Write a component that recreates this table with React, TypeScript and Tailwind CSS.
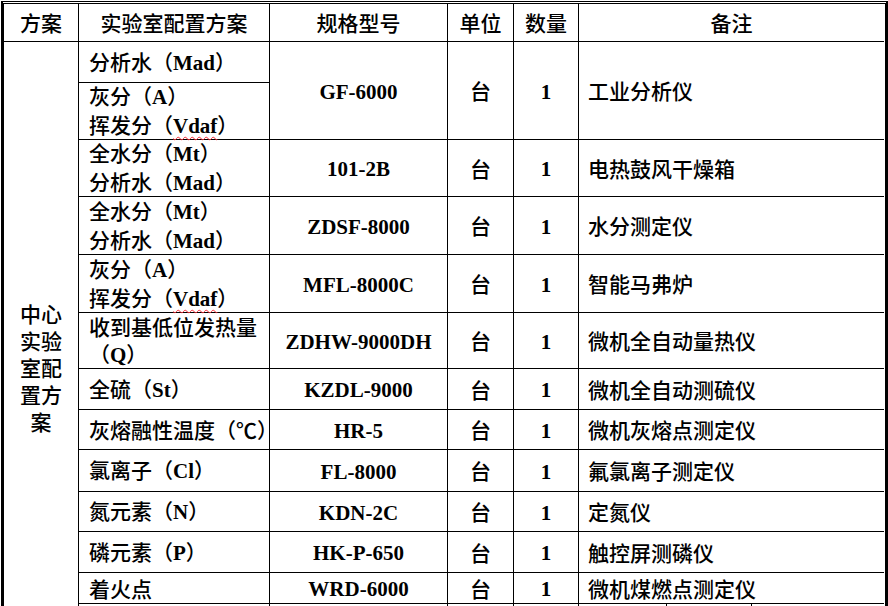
import React from "react";

type Row = {
    item: string[];
    model?: string;
    unit?: string;
    qty?: string;
    note?: string;
    span?: boolean;
    h: string;
};

// Latin runs (numbers, model codes) are bold Times; CJK stays regular
function Mixed({ text }: { text: string }) {
    const parts = text.split(/([A-Za-z0-9-]+)/);
    return (
        <>
            {parts.map((p, i) => {
                if (!p) return null;
                if (/^[A-Za-z0-9-]+$/.test(p)) {
                    const wavy = p === "Vdaf";
                    return (
                        <span
                            key={i}
                            className={
                                "font-bold font-['Liberation_Serif'] " +
                                (wavy ? "underline decoration-wavy decoration-red-500 decoration-1 underline-offset-[3px]" : "")
                            }
                        >
                            {p}
                        </span>
                    );
                }
                return <span key={i}>{p}</span>;
            })}
        </>
    );
}

const rows: Row[] = [
    { item: ["分析水（Mad）"], model: "GF-6000", unit: "台", qty: "1", note: "工业分析仪", span: true, h: "41px" },
    { item: ["灰分（A）", "挥发分（Vdaf）"], h: "57px" },
    { item: ["全水分（Mt）", "分析水（Mad）"], model: "101-2B", unit: "台", qty: "1", note: "电热鼓风干燥箱", h: "57px" },
    { item: ["全水分（Mt）", "分析水（Mad）"], model: "ZDSF-8000", unit: "台", qty: "1", note: "水分测定仪", h: "58px" },
    { item: ["灰分（A）", "挥发分（Vdaf）"], model: "MFL-8000C", unit: "台", qty: "1", note: "智能马弗炉", h: "58px" },
    { item: ["收到基低位发热量", "（Q）"], model: "ZDHW-9000DH", unit: "台", qty: "1", note: "微机全自动量热仪", h: "56px" },
    { item: ["全硫（St）"], model: "KZDL-9000", unit: "台", qty: "1", note: "微机全自动测硫仪", h: "41px" },
    { item: ["灰熔融性温度（℃）"], model: "HR-5", unit: "台", qty: "1", note: "微机灰熔点测定仪", h: "40px" },
    { item: ["氯离子（Cl）"], model: "FL-8000", unit: "台", qty: "1", note: "氟氯离子测定仪", h: "42px" },
    { item: ["氮元素（N）"], model: "KDN-2C", unit: "台", qty: "1", note: "定氮仪", h: "40px" },
    { item: ["磷元素（P）"], model: "HK-P-650", unit: "台", qty: "1", note: "触控屏测磷仪", h: "41px" },
    { item: ["着火点"], model: "WRD-6000", unit: "台", qty: "1", note: "微机煤燃点测定仪", h: "31px" },
];

const cell = "border-r border-b border-black flex items-center";

export default function App() {
    return (
        <div className="w-[888px] h-[606px] overflow-hidden bg-white pl-px pt-px text-black text-[21px] leading-[27px] font-medium font-['Noto_Sans_CJK_SC','Liberation_Serif',sans-serif]">
            <div className="grid w-[887px] grid-cols-[75px_191px_178px_66px_65px_305px] grid-rows-[38px_41px_57px_57px_58px_58px_56px_41px_40px_42px_40px_41px_31px_90px] border-l-[3px] border-t-[3px] border-t-black border-double border-r-[3px] border-l-black border-r-black [border-left-style:solid] [border-right-style:solid]">
                {/* header */}
                <div className={cell + " justify-center"}>方案</div>
                <div className={cell + " justify-center"}>实验室配置方案</div>
                <div className={cell + " justify-center"}>规格型号</div>
                <div className={cell + " justify-center"}>单位</div>
                <div className={cell + " justify-center"}>数量</div>
                <div className="border-b border-black flex items-center justify-center">备注</div>

                {/* scheme column spans all rows */}
                <div className="row-span-13 border-r border-b border-black flex items-center justify-center px-[13px] text-center">
                    中心实验室配置方案
                </div>

                {rows.map((r, i) => (
                    <React.Fragment key={i}>
                        <div className={cell + " pl-[10px]"}>
                            <div>
                                {r.item.map((t, j) => (
                                    <div key={j}>
                                        <Mixed text={t} />
                                    </div>
                                ))}
                            </div>
                        </div>
                        {r.model && (
                            <>
                                <div className={cell + " justify-center pt-[3px] font-bold font-['Liberation_Serif'] " + (r.span ? "row-span-2" : "")}>
                                    {r.model}
                                </div>
                                <div className={cell + " justify-center " + (r.span ? "row-span-2" : "")}>{r.unit}</div>
                                <div className={cell + " justify-center pt-[3px] font-bold font-['Liberation_Serif'] " + (r.span ? "row-span-2" : "")}>
                                    {r.qty}
                                </div>
                                <div className={"border-b border-black flex items-center pl-[9px] " + (r.span ? "row-span-2" : "")}>
                                    {r.note}
                                </div>
                            </>
                        )}
                    </React.Fragment>
                ))}

                {/* next row, cut off by the window */}
                <div className={cell}></div>
                <div className={cell}></div>
                <div className={cell}></div>
                <div className={cell}></div>
                <div className="border-b border-black flex">
                    <div className="w-[88px] border-r border-black"></div>
                    <div className="w-[85px] border-r border-black"></div>
                    <div className="flex-1"></div>
                </div>
            </div>
        </div>
    );
}
